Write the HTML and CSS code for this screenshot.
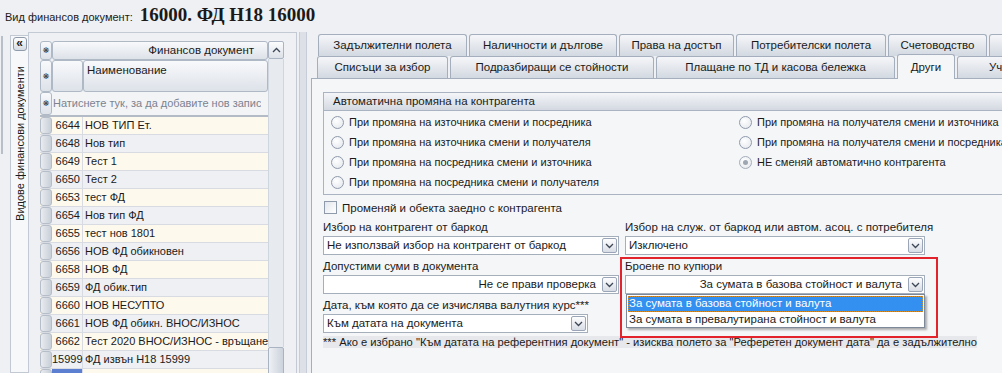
FILE: index.html
```html
<!DOCTYPE html>
<html lang="bg">
<head>
    <meta charset="UTF-8">
    <title>Вид финансов документ</title>
    <link rel="stylesheet" href="styles.css">
</head>
<body>
    <div class="header">
        <span class="doc-label">Вид финансов документ:</span>
        <span class="doc-name">16000. ФД Н18 16000</span>
    </div>

    <div class="main">
        <div class="edge"></div>

        <div class="side-tab">
            <div class="collapse">«</div>
            <div class="side-title">Видове финансови документи</div>
        </div>

        <div class="list-panel">
            <div class="grid">
                <div class="grid-main">
                    <div class="band">
                        <div class="sel hdr">❋</div>
                        <div class="band-title hdr">Финансов документ</div>
                    </div>
                    <div class="cols">
                        <div class="sel hdr">❋</div>
                        <div class="col-id hdr"></div>
                        <div class="col-name hdr">Наименование</div>
                    </div>
                    <div class="new-row">
                        <div class="sel hdr">❋</div>
                        <div class="new-text">Натиснете тук, за да добавите нов запис</div>
                    </div>

                    <div class="row"><div class="sel"></div><div class="id">6644</div><div class="name">НОВ ТИП Ет.</div></div>
                    <div class="row"><div class="sel"></div><div class="id">6648</div><div class="name">Нов тип</div></div>
                    <div class="row"><div class="sel"></div><div class="id">6649</div><div class="name">Тест 1</div></div>
                    <div class="row"><div class="sel"></div><div class="id">6650</div><div class="name">Тест 2</div></div>
                    <div class="row"><div class="sel"></div><div class="id">6653</div><div class="name">тест ФД</div></div>
                    <div class="row"><div class="sel"></div><div class="id">6654</div><div class="name">Нов тип ФД</div></div>
                    <div class="row"><div class="sel"></div><div class="id">6655</div><div class="name">тест нов 1801</div></div>
                    <div class="row"><div class="sel"></div><div class="id">6656</div><div class="name">НОВ ФД обикновен</div></div>
                    <div class="row"><div class="sel"></div><div class="id">6658</div><div class="name">НОВ ФД</div></div>
                    <div class="row"><div class="sel"></div><div class="id">6659</div><div class="name">ФД обик.тип</div></div>
                    <div class="row"><div class="sel"></div><div class="id">6660</div><div class="name">НОВ НЕСУПТО</div></div>
                    <div class="row"><div class="sel"></div><div class="id">6661</div><div class="name">НОВ ФД обикн. ВНОС/ИЗНОС</div></div>
                    <div class="row"><div class="sel"></div><div class="id">6662</div><div class="name">Тест 2020 ВНОС/ИЗНОС - връщане</div></div>
                    <div class="row"><div class="sel"></div><div class="id">15999</div><div class="name">ФД извън Н18 15999</div></div>
                    <div class="row current"><div class="sel"></div><div class="id"></div><div class="name"></div></div>
                </div>

                <div class="vscroll">
                    <div class="vs-btn">
                        <svg width="9" height="6" viewBox="0 0 9 6"><polyline points="1,5 4.5,1.5 8,5" fill="none" stroke="#3c4654" stroke-width="1.3"/></svg>
                    </div>
                    <div class="vs-track"></div>
                    <div class="vs-thumb"></div>
                </div>
            </div>
        </div>

        <div class="splitter"></div>

        <div class="tabs-area">
            <div class="tab-row back">
                <div class="tab w149">Задължителни полета</div>
                <div class="tab w148">Наличности и дългове</div>
                <div class="tab w115">Права на достъп</div>
                <div class="tab w150">Потребителски полета</div>
                <div class="tab w99">Счетоводство</div>
                <div class="tab w60"></div>
            </div>
            <div class="tab-row front">
                <div class="tab w131">Списъци за избор</div>
                <div class="tab w204">Подразбиращи се стойности</div>
                <div class="tab w239">Плащане по ТД и касова бележка</div>
                <div class="tab w58 active">Други</div>
                <div class="tab w60 cut">Участници</div>
            </div>

            <div class="tab-page">
                <div class="group">
                    <div class="group-title">Автоматична промяна на контрагента</div>
                    <div class="radio-grid">
                        <label class="radio"><span class="dot"></span>При промяна на източника смени и посредника</label>
                        <label class="radio"><span class="dot"></span>При промяна на източника смени и получателя</label>
                        <label class="radio"><span class="dot"></span>При промяна на посредника смени и източника</label>
                        <label class="radio"><span class="dot"></span>При промяна на посредника смени и получателя</label>
                        <label class="radio"><span class="dot"></span>При промяна на получателя смени и източника</label>
                        <label class="radio"><span class="dot"></span>При промяна на получателя смени и посредника</label>
                        <label class="radio"><span class="dot checked"></span>НЕ сменяй автоматично контрагента</label>
                    </div>
                </div>

                <label class="check"><span class="box"></span>Променяй и обекта заедно с контрагента</label>

                <div class="form">
                    <div class="field">
                        <div class="field-label">Избор на контрагент от баркод</div>
                        <div class="combo">
                            <div class="combo-text">Не използвай избор на контрагент от баркод</div>
                            <div class="combo-btn"><svg width="9" height="6" viewBox="0 0 9 6"><polyline points="1,1 4.5,4.5 8,1" fill="none" stroke="#3c4654" stroke-width="1.3"/></svg></div>
                        </div>
                    </div>
                    <div class="field">
                        <div class="field-label">Избор на служ. от баркод или автом. асоц. с потребителя</div>
                        <div class="combo">
                            <div class="combo-text">Изключено</div>
                            <div class="combo-btn"><svg width="9" height="6" viewBox="0 0 9 6"><polyline points="1,1 4.5,4.5 8,1" fill="none" stroke="#3c4654" stroke-width="1.3"/></svg></div>
                        </div>
                    </div>

                    <div class="field">
                        <div class="field-label">Допустими суми в документа</div>
                        <div class="combo right">
                            <div class="combo-text">Не се прави проверка</div>
                            <div class="combo-btn"><svg width="9" height="6" viewBox="0 0 9 6"><polyline points="1,1 4.5,4.5 8,1" fill="none" stroke="#3c4654" stroke-width="1.3"/></svg></div>
                        </div>
                    </div>
                    <div class="field open">
                        <div class="field-label">Броене по купюри</div>
                        <div class="combo right">
                            <div class="combo-text">За сумата в базова стойност и валута</div>
                            <div class="combo-btn"><svg width="9" height="6" viewBox="0 0 9 6"><polyline points="1,1 4.5,4.5 8,1" fill="none" stroke="#3c4654" stroke-width="1.3"/></svg></div>
                        </div>
                        <div class="dropdown">
                            <div class="option selected">За сумата в базова стойност и валута</div>
                            <div class="option">За сумата в превалутирана стойност и валута</div>
                        </div>
                        <div class="highlight"></div>
                    </div>

                    <div class="field">
                        <div class="field-label">Дата, към която да се изчислява валутния курс***</div>
                        <div class="combo short">
                            <div class="combo-text">Към датата на документа</div>
                            <div class="combo-btn"><svg width="9" height="6" viewBox="0 0 9 6"><polyline points="1,1 4.5,4.5 8,1" fill="none" stroke="#3c4654" stroke-width="1.3"/></svg></div>
                        </div>
                    </div>
                </div>

                <div class="footnote"><span>*** Ако е избрано "Към датата на референтния документ" - изисква полето за "Реферетен документ дата" да е задължително</span></div>
            </div>
        </div>
    </div>
</body>
</html>
```

FILE: styles.css
```css
* {
    box-sizing: border-box;
}
body {
    margin: 0;
    width: 1002px;
    height: 373px;
    overflow: hidden;
    background: #eef0f3;
    font-family: 'Liberation Sans', Arial, sans-serif;
    font-size: 11px;
    color: #1a1a1a;
}

/* title line */
.header {
    height: 32px;
    display: flex;
    align-items: baseline;
    gap: 7px;
    padding: 3px 0 0 5px;
}
.doc-label {
    font-size: 11px;
}
.doc-name {
    font-family: 'Liberation Serif', 'Times New Roman', serif;
    font-weight: bold;
    font-size: 19px;
    line-height: 24px;
}

.main {
    display: flex;
    height: 341px;
}
.edge {
    width: 10px;
    background: linear-gradient(#b8bfc9, #b8bfc9) 1px 4px / 2px 118px no-repeat;
}

/* collapsed side tab */
.side-tab {
    width: 18px;
    margin-top: 3px;
    border: 1px solid #c2c9d3;
    border-right: none;
    background: #f7f8fa;
    display: flex;
    flex-direction: column;
    align-items: center;
    padding-top: 1px;
}
.collapse {
    width: 14px;
    height: 14px;
    border: 1px solid #8f9bab;
    border-radius: 3px;
    background: linear-gradient(#fdfdfe, #d6dce4);
    font-size: 12px;
    font-weight: bold;
    line-height: 11px;
    text-align: center;
    color: #222;
}
.side-title {
    writing-mode: vertical-rl;
    transform: rotate(180deg);
    margin-top: 15px;
    font-size: 11px;
    line-height: 14px;
}

/* grid panel */
.list-panel {
    width: 269px;
    border: 1px solid #c3cad4;
    border-bottom: none;
    padding: 8px 0 0 11px;
    overflow: hidden;
}
.grid {
    display: flex;
    width: 244px;
}
.grid-main {
    width: 228px;
}
.hdr {
    background: linear-gradient(#f8f9fb, #dde2e9);
    border: 1px solid #afb9c6;
    border-radius: 3px;
}
.sel {
    width: 12px;
    flex: none;
    font-family: 'DejaVu Sans', sans-serif;
    font-size: 8px;
    color: #333;
    display: flex;
    align-items: center;
    justify-content: center;
}
.band {
    display: flex;
    height: 19px;
}
.band-title {
    flex: 1;
    text-align: right;
    padding-right: 13px;
    line-height: 17px;
    font-size: 11.5px;
}
.cols {
    display: flex;
    height: 32px;
}
.col-id {
    width: 31px;
}
.col-name {
    flex: 1;
    padding: 3px 0 0 3px;
    font-size: 11.5px;
}
.new-row {
    display: flex;
    height: 25px;
    border-bottom: 2px solid #b3bbc6;
    background: #f3f4f6;
}
.new-text {
    padding-left: 1px;
    line-height: 22px;
    color: #7b8391;
    font-size: 11px;
    white-space: nowrap;
    overflow: hidden;
}
.row {
    display: flex;
    height: 18px;
    line-height: 17px;
    font-size: 11px;
    border-bottom: 1px solid #d8dce2;
    background: #fef9ed;
}
.row:nth-of-type(2n+1) {
    background: #eef0f3;
}
.row .sel {
    background: linear-gradient(90deg, #e9ecf0, #c8cfd8);
    border: 1px solid #b4bdc8;
    border-radius: 3px;
}
.id {
    width: 31px;
    text-align: right;
    padding-right: 2px;
    border-right: 1px solid #d8dce2;
}
.name {
    flex: 1;
    padding-left: 2px;
    white-space: nowrap;
    overflow: hidden;
}
.row.current .id {
    background: #5d7fd2;
}
.row.current {
    background: #fef9ed;
}

.vscroll {
    width: 16px;
    display: flex;
    flex-direction: column;
}
.vs-btn {
    height: 18px;
    border: 1px solid #aab4c2;
    border-radius: 2px;
    background: linear-gradient(#fbfcfd, #dce1e8);
    display: flex;
    align-items: center;
    justify-content: center;
}
.vs-track {
    height: 288px;
    background: #e7eaee;
    border-left: 1px solid #d0d6de;
    border-right: 1px solid #d0d6de;
}
.vs-thumb {
    height: 30px;
    border: 1px solid #a9b3c1;
    border-radius: 2px;
    background: linear-gradient(90deg, #eef0f4, #ccd3dc);
}

.splitter {
    width: 8px;
    margin-left: 2px;
    background: #dde1e7;
    border-left: 1px solid #c6cdd6;
    border-right: 1px solid #c6cdd6;
}

/* tabs */
.tabs-area {
    flex: 1;
    overflow: hidden;
    padding-top: 2px;
    display: flex;
    flex-direction: column;
}
.tab-row {
    display: flex;
    gap: 2px;
    height: 22px;
    align-items: flex-end;
    white-space: nowrap;
}
.tab-row.back {
    margin-left: 11px;
}
.tab-row.front {
    margin-left: 10px;
}
.tab {
    flex: none;
    height: 22px;
    border: 1px solid #a4aebc;
    border-bottom: none;
    border-radius: 3px 3px 0 0;
    background: linear-gradient(#f5f6f9, #d3d9e1);
    text-align: center;
    line-height: 21px;
    font-size: 11.5px;
    overflow: hidden;
}
.tab.cut {
    text-align: left;
    padding-left: 31px;
}
.tab.active {
    height: 25px;
    margin-bottom: -1px;
    background: #f5f6f8;
    position: relative;
    z-index: 1;
    line-height: 24px;
}
.w58 { width: 58px; }
.w60 { width: 60px; }
.w99 { width: 99px; }
.w115 { width: 115px; }
.w131 { width: 131px; }
.w148 { width: 148px; }
.w149 { width: 149px; }
.w150 { width: 150px; }
.w204 { width: 204px; }
.w239 { width: 239px; }

.tab-page {
    flex: 1;
    margin-left: 4px;
    border: 1px solid #a4aebc;
    border-right: none;
    border-bottom: none;
    background: #f5f6f8;
    padding: 13px 0 0 11px;
    width: 720px;
}

/* group box */
.group {
    width: 700px;
    border: 1px solid #aab3c1;
}
.group-title {
    height: 18px;
    line-height: 17px;
    padding-left: 9px;
    font-size: 11.5px;
    background: linear-gradient(#f3f5f8, #d4d9e1);
    border-bottom: 1px solid #aab3c1;
}
.radio-grid {
    display: grid;
    grid-template-columns: 408px 1fr;
    grid-template-rows: repeat(4, 20px);
    grid-auto-flow: column;
    padding: 1px 0 2px 7px;
}
.radio {
    display: flex;
    align-items: center;
    gap: 5px;
    white-space: nowrap;
}
.dot {
    width: 13px;
    height: 13px;
    border-radius: 50%;
    border: 1px solid #8f9aab;
    background: radial-gradient(circle at 40% 35%, #ffffff, #e1e5eb);
    display: flex;
    align-items: center;
    justify-content: center;
}
.dot.checked {
    border-color: #a5adb9;
}
.dot.checked::after {
    content: "";
    width: 5px;
    height: 5px;
    border-radius: 50%;
    background: #9ea6b2;
}

.check {
    display: flex;
    align-items: center;
    gap: 5px;
    height: 17px;
    margin-top: 4px;
    padding-left: 1px;
    font-size: 11.5px;
}
.box {
    width: 13px;
    height: 13px;
    border: 1px solid #8f9aab;
    background: linear-gradient(135deg, #e3e7ec, #ffffff);
}

/* fields */
.form {
    display: grid;
    grid-template-columns: 296px 300px;
    column-gap: 6px;
    margin-top: 2px;
    font-size: 11.5px;
}
.field {
    margin-bottom: 2px;
}
.field.open {
    position: relative;
}
.field-label {
    height: 18px;
    line-height: 18px;
    white-space: nowrap;
}
.combo {
    display: flex;
    height: 19px;
    border: 1px solid #a5aebb;
    background: #fff;
}
.combo.short {
    width: 265px;
}
.combo-text {
    flex: 1;
    padding: 0 3px;
    line-height: 17px;
    white-space: nowrap;
    overflow: hidden;
}
.combo.right .combo-text {
    text-align: right;
    padding-right: 5px;
}
.combo-btn {
    width: 15px;
    height: 15px;
    margin: 1px;
    border: 1px solid #9aa6b8;
    border-radius: 2px;
    background: linear-gradient(#fdfdfe, #d8dde5);
    display: flex;
    align-items: center;
    justify-content: center;
}

.dropdown {
    position: absolute;
    top: 37px;
    left: 1px;
    width: 299px;
    height: 34px;
    background: #fff;
    border: 1px solid #7d8898;
    box-shadow: 2px 2px 2px rgba(0, 0, 0, 0.3);
    padding: 1px;
    z-index: 2;
}
.option {
    height: 16px;
    line-height: 15px;
    padding-left: 1px;
    white-space: nowrap;
}
.option.selected {
    background: #3390f0;
    color: #fff;
    outline: 1px dotted #d08a2a;
    outline-offset: -1px;
}
.highlight {
    position: absolute;
    top: 0;
    left: -5px;
    width: 318px;
    height: 81px;
    border: 2px solid #e3232b;
    z-index: 3;
}

.footnote {
    line-height: 15px;
    font-size: 11.2px;
    white-space: nowrap;
}
.footnote span {
    background: #e6e8eb;
}
```
